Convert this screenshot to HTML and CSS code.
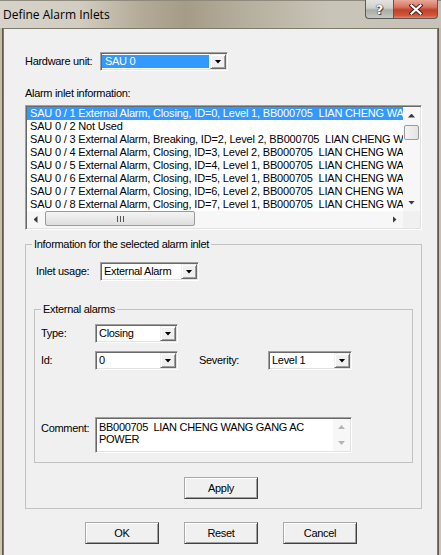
FILE: index.html
```html
<!DOCTYPE html>
<html>
<head>
<meta charset="utf-8">
<title>Define Alarm Inlets</title>
<link rel="stylesheet" href="styles.css">
</head>
<body>
<div class="window">
  <div class="titlebar">
    <div class="title">Define Alarm Inlets</div>
    <div class="caption-btns">
      <div class="cbtn help">?</div>
      <div class="cbtn close">
        <svg width="14" height="11" viewBox="0 0 14 11"><path d="M2.5 1.5 L11.5 9.5 M11.5 1.5 L2.5 9.5" stroke="#4a1c14" stroke-width="4" stroke-linecap="square" fill="none"/><path d="M2.5 1.5 L11.5 9.5 M11.5 1.5 L2.5 9.5" stroke="#ffffff" stroke-width="2.2" stroke-linecap="square" fill="none"/></svg>
      </div>
    </div>
  </div>
  <div class="client">
    <div class="row hw-row">
      <span class="lbl lbl-hw">Hardware unit:</span>
      <div class="combo combo-hw"><div class="val val-sel">SAU 0</div><div class="dd"></div></div>
    </div>
    <div class="sect-lbl">Alarm inlet information:</div>
    <div class="listbox">
      <div class="rows">
        <div class="item item-sel">SAU 0 / 1 External Alarm, Closing, ID=0, Level 1, BB000705  LIAN CHENG WANG GANG AC POWER</div>
        <div class="item">SAU 0 / 2 Not Used</div>
        <div class="item">SAU 0 / 3 External Alarm, Breaking, ID=2, Level 2, BB000705  LIAN CHENG WANG GANG AC POWER</div>
        <div class="item">SAU 0 / 4 External Alarm, Closing, ID=3, Level 2, BB000705  LIAN CHENG WANG GANG AC POWER</div>
        <div class="item">SAU 0 / 5 External Alarm, Closing, ID=4, Level 1, BB000705  LIAN CHENG WANG GANG AC POWER</div>
        <div class="item">SAU 0 / 6 External Alarm, Closing, ID=5, Level 1, BB000705  LIAN CHENG WANG GANG AC POWER</div>
        <div class="item">SAU 0 / 7 External Alarm, Closing, ID=6, Level 2, BB000705  LIAN CHENG WANG GANG AC POWER</div>
        <div class="item">SAU 0 / 8 External Alarm, Closing, ID=7, Level 1, BB000705  LIAN CHENG WANG GANG AC POWER</div>
      </div>
      <div class="vscroll">
        <div class="sarrow"><span class="tri tri-up"></span></div>
        <div class="vtrack"><div class="vthumb"></div></div>
        <div class="sarrow"><span class="tri tri-down"></span></div>
      </div>
      <div class="hscroll">
        <div class="sarrow"><span class="tri tri-left"></span></div>
        <div class="htrack"><div class="hthumb"><span class="grip"></span></div></div>
        <div class="sarrow"><span class="tri tri-right"></span></div>
      </div>
      <div class="corner"></div>
    </div>

    <fieldset class="group group-outer">
      <legend>Information for the selected alarm inlet</legend>
      <div class="gbody gbody-outer">
        <div class="row inlet-row">
          <span class="lbl lbl-inlet">Inlet usage:</span>
          <div class="combo combo-inlet"><div class="val">External Alarm</div><div class="dd"></div></div>
        </div>

        <fieldset class="group group-inner">
          <legend>External alarms</legend>
          <div class="gbody gbody-inner">
            <div class="row">
              <span class="lbl lbl-ext">Type:</span>
              <div class="combo combo-small"><div class="val">Closing</div><div class="dd"></div></div>
            </div>
            <div class="row id-row">
              <span class="lbl lbl-ext">Id:</span>
              <div class="combo combo-small"><div class="val">0</div><div class="dd"></div></div>
              <span class="lbl lbl-sev">Severity:</span>
              <div class="combo combo-sev"><div class="val">Level 1</div><div class="dd"></div></div>
            </div>
            <div class="row comment-row">
              <span class="lbl lbl-ext lbl-comment">Comment:</span>
              <div class="memo">
                <div class="memo-text">BB000705  LIAN CHENG WANG GANG AC POWER</div>
                <div class="memo-scroll">
                  <div class="marrow"><span class="tri tri-up tri-dis"></span></div>
                  <div class="marrow"><span class="tri tri-down tri-dis"></span></div>
                </div>
              </div>
            </div>
          </div>
        </fieldset>

        <div class="apply-row"><button class="btn">Apply</button></div>
      </div>
    </fieldset>

    <div class="btn-row">
      <button class="btn">OK</button>
      <button class="btn">Reset</button>
      <button class="btn">Cancel</button>
    </div>
  </div>
</div>
</body>
</html>
```

FILE: styles.css
```css
* { box-sizing: border-box; }
html, body { margin: 0; padding: 0; }
body {
  width: 441px;
  height: 555px;
  overflow: hidden;
  font-family: "Liberation Sans", Arial, sans-serif;
  font-size: 11px;
  letter-spacing: -0.3px;
  color: #000;
  background: #c9c2ad;
}
.window {
  width: 441px;
  height: 555px;
  display: flex;
  flex-direction: column;
  background: linear-gradient(to bottom, #c3bca6, #cdc6b1);
}

/* title bar */
.titlebar {
  height: 28px;
  flex: none;
  display: flex;
  align-items: flex-start;
  background: linear-gradient(to right, #d7d3ca 0%, #d2cdc1 18%, #b3ab97 32%, #a49c86 42%, #b5ae9c 55%, #c9c4b8 75%, #c7c2b7 100%);
  border-top: 1px solid #8f8a7e;
}
.title {
  font-family: "Open Sans", "Noto Sans", sans-serif;
  font-size: 12px;
  letter-spacing: 0;
  line-height: 16px;
  padding: 6px 0 0 3px;
  color: #000;
}
.caption-btns {
  margin-left: auto;
  margin-right: 3px;
  display: flex;
  margin-top: -1px;
}
.cbtn {
  height: 19px;
  display: flex;
  align-items: center;
  justify-content: center;
  border: 1px solid #5b5a55;
  border-top: none;
}
.help {
  width: 28px;
  border-right: none;
  border-bottom-left-radius: 4px;
  background: linear-gradient(to bottom, #e2e2df 0%, #cfcfcb 45%, #a9aba6 55%, #c5c7c3 100%);
  color: #fff;
  font-family: "DejaVu Sans", sans-serif;
  font-weight: bold;
  font-size: 13px;
  letter-spacing: 0;
  text-shadow: 0 0 1px #333, 0 0 1px #333, 1px 1px 0 #555;
}
.close {
  width: 45px;
  border-bottom-right-radius: 4px;
  background: linear-gradient(to bottom, #e9a99b 0%, #d7725d 40%, #c1402a 55%, #d0553a 85%, #e0846c 100%);
}

/* client */
.client {
  flex: 1;
  margin: 0 3px;
  border: 1px solid #7f7b6c;
  border-bottom: none;
  background: #f0f0f0;
  padding: 23px 15px 0 21px;
  box-shadow: -1px 0 0 #5e5a4c, 1px 0 0 #5e5a4c;
}

.row {
  display: flex;
  align-items: center;
}
.lbl { white-space: nowrap; line-height: 13px; }
.lbl-hw { width: 75px; }
.lbl-inlet { width: 64px; }
.lbl-ext { width: 54px; }
.lbl-sev { width: 69px; margin-left: 21px; }

/* combo boxes */
.combo {
  height: 19px;
  display: flex;
  background: #fff;
  border: 1px solid;
  border-color: #a0a0a0 #ffffff #ffffff #a0a0a0;
  box-shadow: inset 1px 1px 0 #696969, inset -1px -1px 0 #e3e3e3;
  padding: 1px;
}
.combo-hw { width: 128px; }
.combo-inlet { width: 99px; }
.combo-small { width: 83px; }
.combo-sev { width: 84px; }
.val {
  flex: 1;
  line-height: 15px;
  padding-left: 2px;
  white-space: nowrap;
  overflow: hidden;
}
.val-sel {
  background: #3399ff;
  color: #fff;
  margin: 1px 1px 1px 0;
  line-height: 13px;
  padding-left: 3px;
}
.dd {
  width: 16px;
  flex: none;
  background: #f0f0f0;
  border: 1px solid;
  border-color: #f0f0f0 #696969 #696969 #f0f0f0;
  box-shadow: inset 1px 1px 0 #fff, inset -1px -1px 0 #a0a0a0;
  display: flex;
  align-items: center;
  justify-content: center;
}
.dd::after {
  content: "";
  width: 7px;
  height: 4px;
  background: #000;
  clip-path: polygon(0 0, 100% 0, 50% 100%);
}

.sect-lbl {
  margin-top: 16px;
  line-height: 13px;
}

/* list box */
.listbox {
  margin-top: 5px;
  width: 397px;
  height: 125px;
  background: #fff;
  border: 1px solid;
  border-color: #a0a0a0 #ffffff #ffffff #a0a0a0;
  box-shadow: inset 1px 1px 0 #696969, inset -1px -1px 0 #e3e3e3;
  padding: 1px;
  display: grid;
  grid-template-columns: 376px 17px;
  grid-template-rows: 104px 17px;
}
.rows { overflow: hidden; }
.item {
  height: 13px;
  line-height: 13px;
  white-space: pre;
  overflow: hidden;
  padding-left: 3px;
  letter-spacing: -0.18px;
}
.item-sel { background: #3399ff; color: #fff; }

.vscroll {
  display: flex;
  flex-direction: column;
  background: #f7f7f7;
}
.hscroll {
  display: flex;
  background: #f7f7f7;
}
.corner { background: #f0f0f0; }
.sarrow {
  flex: none;
  width: 17px;
  height: 17px;
  display: flex;
  align-items: center;
  justify-content: center;
}
.vtrack { flex: 1; padding: 1px 1px 0 1px; }
.vthumb {
  height: 15px;
  border: 1px solid #9b9b9b;
  border-radius: 2px;
  background: linear-gradient(to right, #f4f4f4, #e3e3e3);
}
.htrack { flex: 1; padding: 0 0 0 1px; }
.hthumb {
  width: 150px;
  height: 15px;
  border: 1px solid #9b9b9b;
  border-radius: 2px;
  background: linear-gradient(to bottom, #f4f4f4, #dedede);
  display: flex;
  align-items: center;
  justify-content: center;
}
.grip {
  width: 7px;
  height: 6px;
  background: repeating-linear-gradient(to right, #555 0, #555 1px, transparent 1px, transparent 3px);
}
.tri { display: block; background: #3a3a3a; }
.tri-up { width: 7px; height: 4px; clip-path: polygon(50% 0, 100% 100%, 0 100%); }
.tri-down { width: 7px; height: 4px; clip-path: polygon(0 0, 100% 0, 50% 100%); }
.tri-left { width: 4px; height: 7px; clip-path: polygon(100% 0, 100% 100%, 0 50%); }
.tri-right { width: 4px; height: 7px; clip-path: polygon(0 0, 100% 50%, 0 100%); }
.tri-dis { background: #b5b5b5; }

/* group boxes */
.group {
  margin: 0;
  padding: 0;
  min-width: 0;
  border: 1px solid #c2c2c2;
}
.group legend {
  margin-left: 6px;
  padding: 0 2px;
  line-height: 13px;
}
.group-outer { margin-top: 8px; width: 397px; }
.gbody-outer { padding: 11px 8px 9px 8px; }
.inlet-row { margin-left: 2px; }
.group-inner { margin-top: 22px; width: 379px; }
.gbody-inner { padding: 8px 0 9px 6px; }
.id-row { margin-top: 8px; }
.comment-row { margin-top: 47px; align-items: flex-start; }
.lbl-comment { padding-top: 5px; }

.memo {
  width: 257px;
  height: 36px;
  display: flex;
  background: #fff;
  border: 1px solid;
  border-color: #a0a0a0 #ffffff #ffffff #a0a0a0;
  box-shadow: inset 1px 1px 0 #696969, inset -1px -1px 0 #e3e3e3;
  padding: 1px;
}
.memo-text {
  flex: 1;
  padding: 2px 2px 0 2px;
  line-height: 12px;
  white-space: pre-wrap;
  overflow: hidden;
}
.memo-scroll {
  width: 17px;
  flex: none;
  display: flex;
  flex-direction: column;
  justify-content: space-between;
  background: #f7f7f7;
}
.marrow {
  height: 16px;
  display: flex;
  align-items: center;
  justify-content: center;
}

/* buttons */
.btn {
  width: 74px;
  height: 22px;
  padding: 0;
  font-family: "Liberation Sans", Arial, sans-serif;
  font-size: 11px;
  letter-spacing: -0.3px;
  color: #000;
  background: #f0f0f0;
  border: 1px solid;
  border-color: #a9a9a9 #404040 #404040 #a9a9a9;
  box-shadow: inset 1px 1px 0 #ffffff, inset -1px -1px 0 #a0a0a0;
  border-radius: 0;
}
.apply-row {
  margin-top: 14px;
  padding-left: 150px;
  display: flex;
}
.btn-row {
  margin-top: 13px;
  padding-left: 60px;
  display: flex;
  gap: 25px;
}
```
